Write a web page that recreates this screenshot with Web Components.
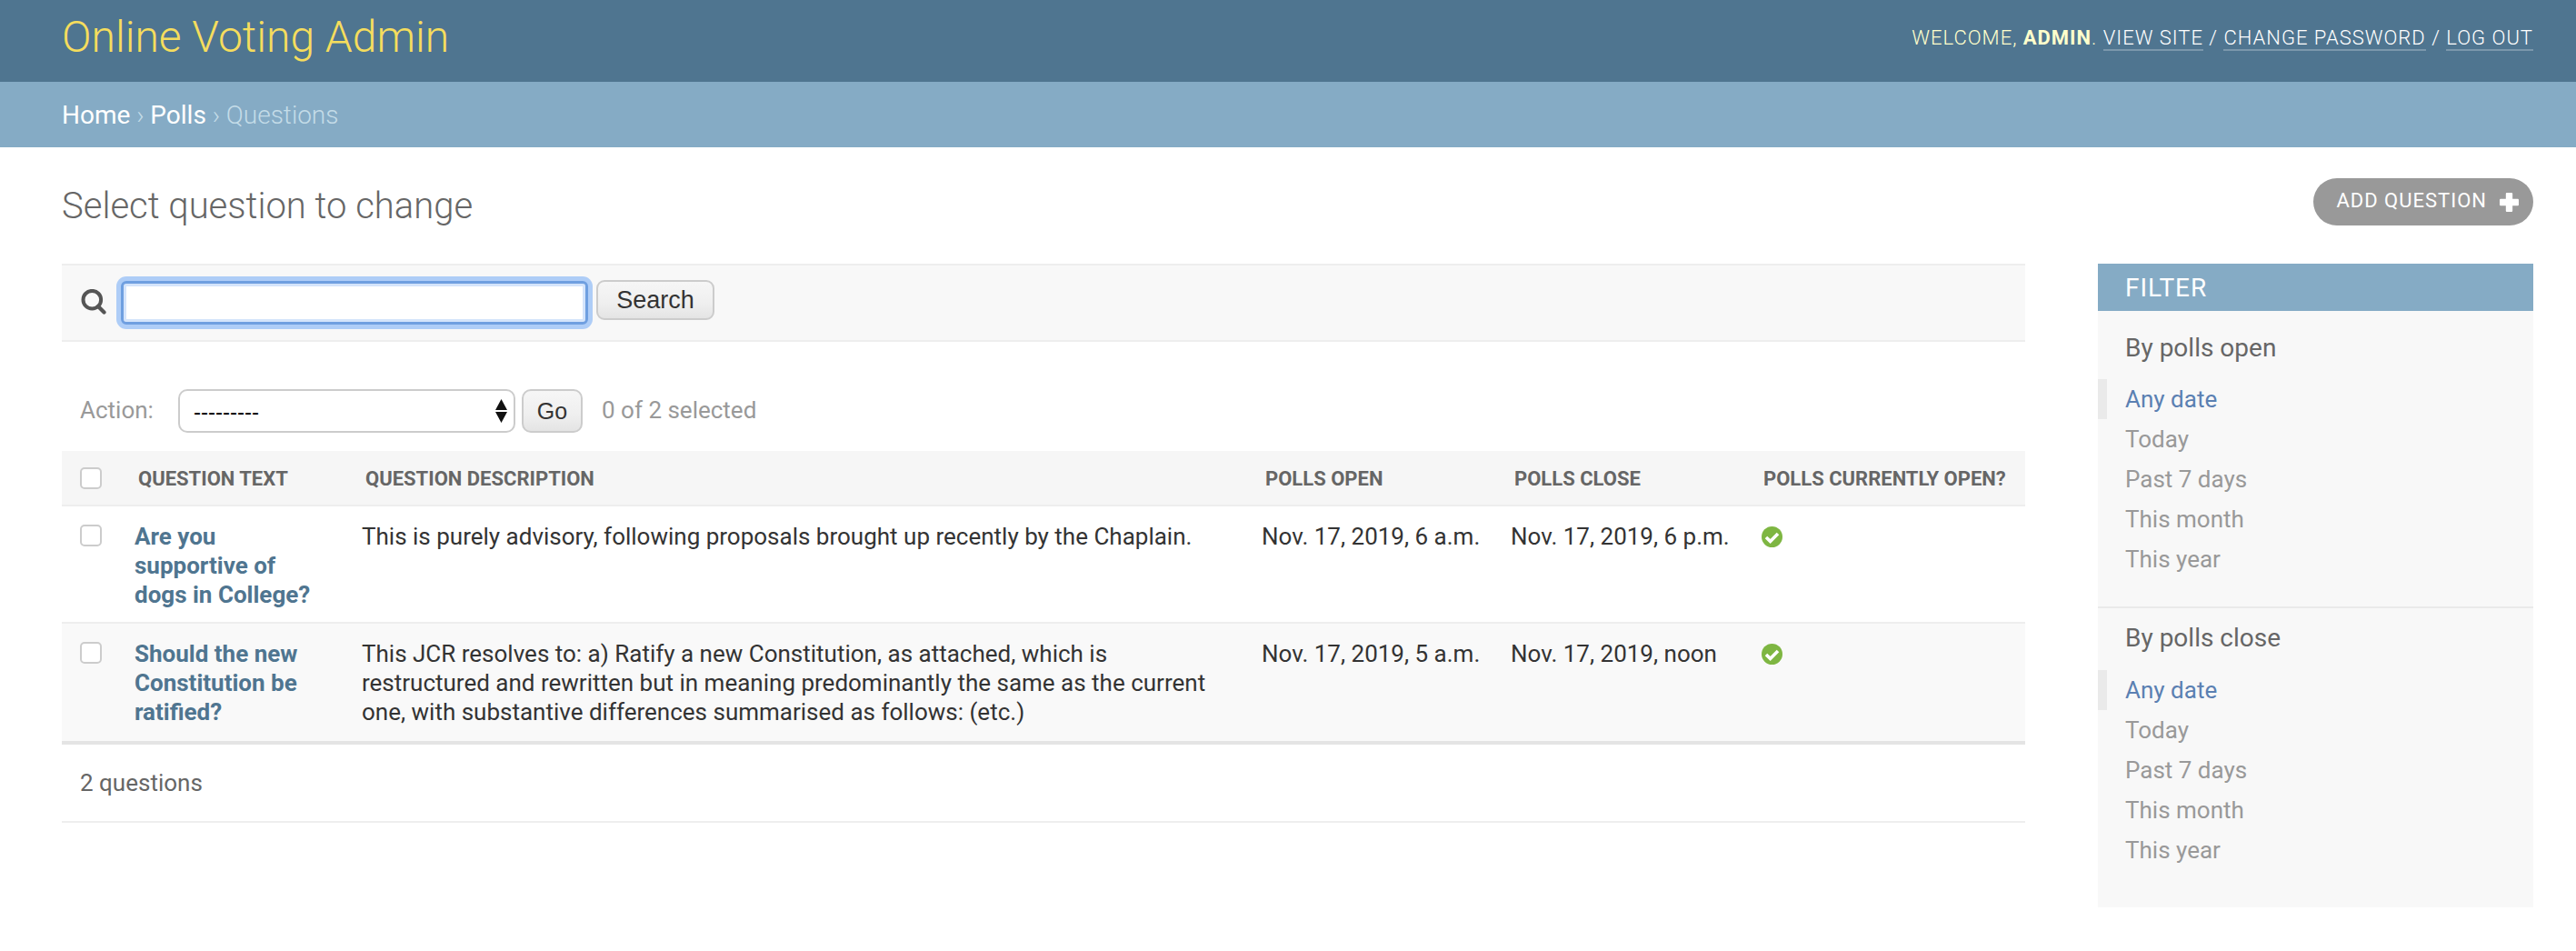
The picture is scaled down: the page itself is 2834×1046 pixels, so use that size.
<!DOCTYPE html>
<html lang="en">
<head>
<meta charset="utf-8">
<title>Select question to change</title>
<style>
  html, body { margin: 0; background: #fff; }
  body { font-family: Roboto, "Liberation Sans", sans-serif; font-size: 26px; color: #333; }
  main { display: block; padding: 0 47px 0 68px; }
  .columns { display: flex; gap: 80px; align-items: flex-start; }
</style>
</head>
<body>
<admin-header title="Online Voting Admin" user="admin"></admin-header>
<admin-breadcrumbs>
  <a href="#">Home</a> › <a href="#">Polls</a> › Questions
</admin-breadcrumbs>
<main>
  <page-title label="Add question">Select question to change</page-title>
  <div class="columns">
    <change-list>
      <search-bar slot="search"></search-bar>
      <action-bar slot="actions" selected="0 of 2 selected"></action-bar>
      <result-row heading>
        <span slot="title">Question text</span>
        <span slot="description">Question description</span>
        <span slot="open">Polls open</span>
        <span slot="close">Polls close</span>
        <span slot="current">Polls currently open?</span>
      </result-row>
      <result-row>
        <span slot="title">Are you supportive of dogs in College?</span>
        <span slot="description">This is purely advisory, following proposals brought up recently by the Chaplain.</span>
        <span slot="open">Nov. 17, 2019, 6 a.m.</span>
        <span slot="close">Nov. 17, 2019, 6 p.m.</span>
        <yes-icon slot="current"></yes-icon>
      </result-row>
      <result-row alt>
        <span slot="title">Should the new Constitution be ratified?</span>
        <span slot="description">This JCR resolves to: a) Ratify a new Constitution, as attached, which is restructured and rewritten but in meaning predominantly the same as the current one, with substantive differences summarised as follows: (etc.)</span>
        <span slot="open">Nov. 17, 2019, 5 a.m.</span>
        <span slot="close">Nov. 17, 2019, noon</span>
        <yes-icon slot="current"></yes-icon>
      </result-row>
      <span slot="footer">2 questions</span>
    </change-list>
    <filter-panel>
      <filter-group title="By polls open"></filter-group>
      <filter-group title="By polls close" last></filter-group>
    </filter-panel>
  </div>
</main>

<script>
function define(name, html, setup) {
  const template = document.createElement("template");
  template.innerHTML = html;
  customElements.define(name, class extends HTMLElement {
    constructor() {
      super();
      this.attachShadow({ mode: "open" }).appendChild(template.content.cloneNode(true));
    }
    connectedCallback() {
      if (setup) setup(this, this.shadowRoot);
    }
  });
}

define("admin-header", `
  <style>
    :host { display: flex; justify-content: space-between; align-items: flex-start; box-sizing: border-box; height: 90px; padding: 0 47px 0 68px; background: #4f7590; color: #ffc; }
    h1 { margin: 0; padding-top: 15px; font-size: 48px; line-height: 52px; font-weight: 300; color: #f5dd5d; }
    div { padding-top: 27px; font-size: 22px; line-height: 29px; letter-spacing: 1px; text-transform: uppercase; font-weight: 300; }
    strong { font-weight: 700; }
    a { color: #fff; text-decoration: none; border-bottom: 2px solid rgba(255,255,255,.25); }
    span { color: #fff; }
  </style>
  <h1></h1>
  <div>Welcome, <strong></strong>. <a href="#">View site</a> <span>/</span> <a href="#">Change password</a> <span>/</span> <a href="#">Log out</a></div>
`, (el, root) => {
  root.querySelector("h1").textContent = el.getAttribute("title");
  root.querySelector("strong").textContent = el.getAttribute("user");
});

define("admin-breadcrumbs", `
  <style>
    :host { display: block; box-sizing: border-box; height: 72px; padding: 0 68px; background: #85abc5; color: #c4dce8; font-size: 28px; line-height: 73px; font-weight: 300; }
    ::slotted(a) { color: #fff; text-decoration: none; font-weight: 400; }
  </style>
  <slot></slot>
`);

define("page-title", `
  <style>
    :host { display: flex; justify-content: space-between; align-items: flex-start; height: 128px; }
    h2 { margin: 0; padding-top: 45px; font-size: 40px; line-height: 40px; font-weight: 300; color: #666; }
    a { display: flex; align-items: center; gap: 14px; box-sizing: border-box; height: 52px; margin-top: 34px; padding: 0 16px 0 25px; border-radius: 26px; background: #999; color: #fff; font-size: 22px; font-weight: 400; letter-spacing: 1px; text-transform: uppercase; text-decoration: none; }
    span { margin-bottom: 3px; }
    svg { width: 21px; height: 21px; }
  </style>
  <h2><slot></slot></h2>
  <a href="#"><span></span><svg viewBox="0 0 20 20"><path d="M6.5 1q0-1 1-1h5q1 0 1 1v5.5H19q1 0 1 1v5q0 1-1 1h-5.5V19q0 1-1 1h-5q-1 0-1-1v-5.5H1q-1 0-1-1v-5q0-1 1-1h5.5z" fill="#fff"/></svg></a>
`, (el, root) => {
  root.querySelector("span").textContent = el.getAttribute("label");
});

define("change-list", `
  <style>
    :host { display: block; width: 2160px; flex: none; }
    .footer { height: 86px; box-sizing: border-box; border-bottom: 2px solid #eee; padding: 0 20px; font-size: 26px; line-height: 84px; color: #666; }
  </style>
  <slot name="search"></slot>
  <slot name="actions"></slot>
  <slot></slot>
  <div class="footer"><slot name="footer"></slot></div>
`);

define("search-bar", `
  <style>
    :host { display: flex; align-items: center; box-sizing: border-box; height: 86px; border-top: 2px solid #eee; border-bottom: 2px solid #eee; background: #f8f8f8; padding: 0 0 0 21px; }
    svg { width: 28px; height: 28px; margin: 0 16px 3px 0; flex: none; }
    input { box-sizing: border-box; width: 514px; height: 48px; margin: 0 9px 0 0; padding: 0 12px; border: 3px solid #6f9fe0; border-radius: 6px; outline: none; background: #fff; box-shadow: 0 0 0 5px #aecdf7, inset 0 0 0 3px #d4e4fb; font: 26px Roboto, sans-serif; }
    button { box-sizing: border-box; width: 130px; height: 44px; margin-bottom: 6px; padding: 0; border: 2px solid #ccc; border-radius: 9px; background: linear-gradient(#f6f6f6, #efefef 60%, #e4e4e4); color: #333; font: 27px "Liberation Sans", sans-serif; }
  </style>
  <svg viewBox="0 0 28 28"><circle cx="12.3" cy="11.7" r="9.8" fill="none" stroke="#555" stroke-width="4"/><path d="M19 19 25.5 25.5" stroke="#555" stroke-width="4.2" stroke-linecap="round"/></svg>
  <input type="text" aria-label="Search">
  <button type="button">Search</button>
`);

define("action-bar", `
  <style>
    :host { display: flex; align-items: flex-start; height: 120px; box-sizing: border-box; padding: 52px 0 0 20px; color: #999; font-size: 26px; line-height: 46px; }
    label { width: 108px; flex: none; }
    .select { display: flex; width: 371px; height: 48px; position: relative; flex: none; }
    select { appearance: none; box-sizing: border-box; width: 100%; height: 100%; padding: 0 15px; border: 2px solid #ccc; border-radius: 10px; background: #fff; color: #000; font: 24px "Liberation Sans", sans-serif; }
    svg { position: absolute; right: 9px; top: 11px; width: 13px; height: 26px; }
    button { box-sizing: border-box; width: 67px; height: 48px; margin: 0 21px 0 7px; padding: 0; border: 2px solid #ccc; border-radius: 10px; background: linear-gradient(#f6f6f6, #efefef 60%, #e4e4e4); color: #333; font: 25px "Liberation Sans", sans-serif; }
  </style>
  <label>Action:</label>
  <div class="select">
    <select aria-label="Action"><option>---------</option></select>
    <svg viewBox="0 0 13 26"><path d="M6.5 0 13 12H0zM6.5 26 0 14H13z" fill="#111"/></svg>
  </div>
  <button type="button">Go</button>
  <span></span>
`, (el, root) => {
  root.querySelector("span").textContent = el.getAttribute("selected");
});

define("result-row", `
  <style>
    :host { display: grid; grid-template-columns: 80px 250px 990px 274px 276px 290px; box-sizing: border-box; height: 129px; padding-top: 17px; border-bottom: 2px solid #eee; color: #333; font-size: 26px; line-height: 32px; }
    :host([alt]) { height: 133px; background: #f9f9f9; border-bottom: 4px solid #e4e4e4; }
    :host([heading]) { height: 61px; padding-top: 0; background: #f6f6f6; color: #666; font-size: 22px; font-weight: 700; line-height: 61px; text-transform: uppercase; }
    .check { padding: 3px 0 0 20px; }
    :host([heading]) .check { padding-top: 18px; }
    i { display: block; box-sizing: border-box; width: 24px; height: 24px; border: 2px solid #ccc; border-radius: 5px; background: #fff; }
    :host([heading]) div:not(.check) { padding-left: 4px; }
    :host([heading]) div:last-child { padding-left: 2px; }
    .title { color: #4f7590; font-weight: 700; padding-right: 40px; }
    :host([heading]) .title { color: #666; padding-right: 0; }
    .description { padding-right: 50px; }
  </style>
  <div class="check"><i></i></div>
  <div class="title"><slot name="title"></slot></div>
  <div class="description"><slot name="description"></slot></div>
  <div><slot name="open"></slot></div>
  <div><slot name="close"></slot></div>
  <div><slot name="current"></slot></div>
`);

define("yes-icon", `
  <style>
    :host { display: block; width: 23px; height: 23px; margin-top: 5px; }
    svg { display: block; width: 23px; height: 23px; }
  </style>
  <svg viewBox="0 0 23 23"><circle cx="11.5" cy="11.5" r="11.5" fill="#7eb642"/><path d="M5 12 9.6 16.4 18 8" fill="none" stroke="#fff" stroke-width="3.6"/></svg>
`);

define("filter-panel", `
  <style>
    :host { display: block; width: 479px; height: 708px; flex: none; background: #f8f8f8; color: #666; }
    h2 { margin: 0; height: 52px; padding-left: 30px; background: #85abc5; color: #fff; font-size: 28px; line-height: 53px; font-weight: 400; letter-spacing: 1px; text-transform: uppercase; }
  </style>
  <h2>Filter</h2>
  <slot></slot>
`);

define("filter-group", `
  <style>
    :host { display: block; box-sizing: border-box; height: 327px; padding-top: 20px; border-bottom: 2px solid #eaeaea; }
    :host([last]) { padding-top: 12px; border-bottom: 0; }
    h3 { margin: 0 0 13px; padding-left: 30px; color: #666; font-size: 28px; line-height: 42px; font-weight: 400; }
    :host([last]) h3 { margin-bottom: 14px; }
    ul { margin: 0; padding: 0; list-style: none; }
    li { box-sizing: border-box; height: 44px; padding-left: 30px; font-size: 26px; line-height: 44px; color: #999; }
    li.selected { padding-left: 20px; border-left: 10px solid #eaeaea; color: #5b80b2; }
  </style>
  <h3></h3>
  <ul>
    <li class="selected">Any date</li>
    <li>Today</li>
    <li>Past 7 days</li>
    <li>This month</li>
    <li>This year</li>
  </ul>
`, (el, root) => {
  root.querySelector("h3").textContent = el.getAttribute("title");
});
</script>
</body>
</html>
